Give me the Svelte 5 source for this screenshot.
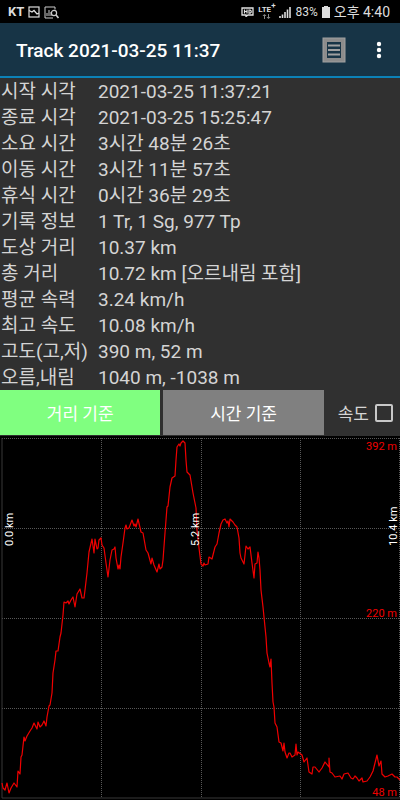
<script lang="ts">
  let mode = $state('distance');
  let showSpeed = $state(false);

  const rows = [
    ['시작 시각', '2021-03-25 11:37:21'],
    ['종료 시각', '2021-03-25 15:25:47'],
    ['소요 시간', '3시간 48분 26초'],
    ['이동 시간', '3시간 11분 57초'],
    ['휴식 시간', '0시간 36분 29초'],
    ['기록 정보', '1 Tr, 1 Sg, 977 Tp'],
    ['도상 거리', '10.37 km'],
    ['총 거리', '10.72 km [오르내림 포함]'],
    ['평균 속력', '3.24 km/h'],
    ['최고 속도', '10.08 km/h'],
    ['고도(고,저)', '390 m, 52 m'],
    ['오름,내림', '1040 m, -1038 m']
  ];

  // 고도 그래프 좌표 (400 x 364)
  const profile = `
    2,347 3,352 5,354 7,347 9,357 11,352 14,347 17,351 18,335 20,338 21,321 22,319 24,301 25,305
    27,300 30,295 32,292 34,287 37,293 38,286 40,291 42,289 44,285 46,290 47,281 49,270 50,269
    52,257 53,237 55,224 56,215 58,215 60,201 61,197 63,179 64,166 66,167 68,165 69,168 71,164
    73,161 75,171 77,158 80,153 82,162 84,162 85,154 87,137 89,116 92,103 94,117 95,103 97,113
    98,112 99,104 101,102 102,109 104,112 106,127 108,141 110,124 112,114 114,113 115,111
    116,122 118,133 119,129 120,133 121,121 123,107 125,92 126,89 127,93 129,92 132,84 134,90
    135,88 136,91 138,83 141,96 143,97 146,114 148,117 151,128 152,122 154,129 157,136 159,128
    160,133 162,131 163,124 165,97 167,71 168,70 170,51 172,42 175,40 176,24 177,11 179,8 180,10
    181,7 183,5 185,7 186,24 187,36 190,39 193,57 196,72 197,94 199,112 201,128 203,130 204,127
    205,129 208,128 209,121 212,123 215,111 217,108 219,97 221,88 223,84 225,83 227,87 228,85
    229,91 230,83 233,86 235,89 237,91 239,102 240,117 241,122 244,128 246,110 248,113 250,111
    252,127 254,142 255,128 257,127 258,116 259,122 260,134 261,154 263,171 264,181 266,201
    267,217 269,227 270,231 271,223 272,247 273,266 274,271 275,287 277,291 279,306 281,307
    283,315 284,307 285,316 287,322 289,317 290,317 292,321 295,319 296,308 297,319 298,316
    302,319 304,326 307,322 309,336 312,338 313,331 315,331 319,336 322,332 325,326 329,331
    329,322 330,336 332,337 335,341 340,340 342,343 344,338 348,337 351,342 353,343 355,340
    357,342 359,345 362,342 363,346 367,345 370,341 373,335 375,327 377,319 379,330 381,325
    382,338 385,341 388,340 392,338 395,341 397,341 400,344`;

  const gridX = [101, 201, 300, 399];
  const gridY = [2, 92, 182, 272];

  const distances = [
    { x: 13, text: '0.0 km' },
    { x: 199, text: '5.2 km' },
    { x: 397, text: '10.4 km' }
  ];

  const heights = [
    { y: 14, text: '392 m' },
    { y: 181, text: '220 m' },
    { y: 360, text: '48 m' }
  ];
</script>

<div class="screen">
  <div class="status-bar">
    <span class="carrier">KT</span>
    <svg width="12" height="12" viewBox="0 0 12 12" fill="none" stroke="#ddd">
      <rect x="1" y="1" width="10" height="10" stroke-width="1.2" />
      <path d="M1 4.5l3 1.5 2-1.5 3 3.5 2-1" stroke-width="1.3" />
    </svg>
    <svg width="15" height="13" viewBox="0 0 15 13" fill="none" stroke="#ccc">
      <path d="M11 3.5V1H1v11h8" />
      <path d="M3 10V7M5 10V4M7 10V6" />
      <circle cx="10" cy="7" r="2.6" stroke-width="1.2" />
      <path d="M12 9l2.5 3" stroke-width="1.6" />
    </svg>
    <span class="spacer"></span>
    <svg width="13" height="10" viewBox="0 0 13 10" fill="none" stroke="#e4e4e4">
      <path d="M3 8H1V1h11v7H7L5 9.5V8H3" stroke-width="1.3" />
      <path d="M3.5 2.5v4M6 2.5v4M3.5 4.5H6M8 3v3.2h1.2l1-1V4l-1-1z" stroke-width="1.2" />
    </svg>
    <span class="lte">
      <span>LTE<sup>+</sup></span>
      <svg width="9" height="5" viewBox="0 0 9 5" fill="#888">
        <path d="M2 5V2H.5l2-2 2 2H3v3zM6 0v3H4.5l2 2 2-2H7V0z" />
      </svg>
    </span>
    <svg width="12" height="12" viewBox="0 0 12 12" stroke="#ddd" stroke-width="1.6">
      <path d="M1 12v-2M3.5 12V8.5M6 12V6M8.5 12V3.5M11 12V1" />
    </svg>
    <span>83%</span>
    <svg width="8" height="12" viewBox="0 0 8 12" fill="#ddd">
      <path d="M2 0h4v1h2v11H0V1h2z" />
    </svg>
    <span class="clock">오후 4:40</span>
  </div>

  <header>
    <h1>Track 2021-03-25 11:37</h1>
    <button class="icon-button list" aria-label="목록">
      <svg width="24" height="26" viewBox="0 0 24 26">
        <rect x="1" y="1" width="22" height="24" fill="#8c8c8c" stroke="#a0a0a0" />
        <rect x="5" y="5" width="14" height="16" fill="#173446" />
        <path d="M6 8.5h12M6 13h12M6 17.5h12" stroke="#a0a0a0" stroke-width="2" />
      </svg>
    </button>
    <button class="icon-button" aria-label="더보기">
      <svg width="6" height="18" viewBox="0 0 6 18" fill="#fff">
        <circle cx="3" cy="3" r="2.2" />
        <circle cx="3" cy="9" r="2.2" />
        <circle cx="3" cy="15" r="2.2" />
      </svg>
    </button>
  </header>

  <table>
    <tbody>
      {#each rows as [label, value]}
        <tr>
          <th scope="row">{label}</th>
          <td>{value}</td>
        </tr>
      {/each}
    </tbody>
  </table>

  <div class="controls">
    <button class="tab" class:active={mode === 'distance'} onclick={() => (mode = 'distance')}>
      거리 기준
    </button>
    <button class="tab" class:active={mode === 'time'} onclick={() => (mode = 'time')}>
      시간 기준
    </button>
    <label>
      속도
      <input type="checkbox" bind:checked={showSpeed} />
    </label>
  </div>

  <svg class="chart" viewBox="0 0 400 364" role="img" aria-label="고도 그래프">
    <g class="grid">
      {#each gridX as x}
        <line x1={x} y1="2" x2={x} y2="362" />
      {/each}
      {#each gridY as y}
        <line x1="2" y1={y} x2="400" y2={y} />
      {/each}
    </g>
    <path class="axis" d="M2 2V362H400" />
    <polyline points={profile} />
    {#each distances as d}
      <text class="distance" transform="translate({d.x} 110) rotate(-90)">{d.text}</text>
    {/each}
    {#each heights as h}
      <text class="height" x="397" y={h.y}>{h.text}</text>
    {/each}
  </svg>
</div>

<style>
  :global(body) {
    margin: 0;
    background: #000;
  }

  .screen {
    background: #303030;
    color: #d4d4d4;
    font-family: Roboto, 'Noto Sans CJK KR', sans-serif;
  }

  button {
    margin: 0;
    padding: 0;
    border: none;
    font-family: inherit;
    cursor: pointer;
  }

  .status-bar {
    display: flex;
    align-items: center;
    gap: 4px;
    height: 22px;
    padding: 1px 10px 0 8px;
    background: #000;
    color: #ddd;
    font-size: 12px;
    line-height: 22px;
    white-space: nowrap;
  }

  .carrier {
    font-size: 13px;
    font-weight: 700;
  }

  .spacer {
    flex: 1;
  }

  .lte {
    display: flex;
    flex-direction: column;
    align-items: center;
    font-size: 8px;
    font-weight: 700;
    line-height: 8px;
  }

  .lte sup {
    font-size: 8px;
    line-height: 1px;
  }

  .clock {
    font-size: 14px;
  }

  header {
    display: flex;
    align-items: center;
    height: 53px;
    padding: 0 4px 0 16px;
    background: #173446;
    border-bottom: 2px solid #0c82b8;
  }

  h1 {
    flex: 1;
    margin: 0;
    padding-top: 2px;
    color: #fff;
    font-size: 19px;
    font-weight: 500;
  }

  .icon-button {
    display: flex;
    align-items: center;
    justify-content: center;
    width: 34px;
    height: 48px;
    background: none;
  }

  .list {
    width: 56px;
  }

  table {
    width: 100%;
    border-collapse: collapse;
    font-size: 19px;
    line-height: 24px;
  }

  th,
  td {
    padding: 2px 0 0;
    font-weight: 400;
    text-align: left;
    white-space: nowrap;
  }

  th {
    width: 97px;
    padding-left: 1px;
  }

  .controls {
    display: flex;
    gap: 3px;
    height: 45px;
    padding-bottom: 1px;
    font-size: 17px;
  }

  .tab {
    flex: 1;
    background: #808080;
    color: #fff;
    font-size: 17px;
  }

  .tab.active {
    background: #80ff80;
  }

  label {
    display: flex;
    align-items: center;
    gap: 6px;
    padding: 0 7px 0 11px;
  }

  input {
    appearance: none;
    width: 18px;
    height: 18px;
    margin: 0;
    border: 2px solid #c8c8c8;
    border-radius: 2px;
  }

  input:checked {
    background: #80ff80;
  }

  .chart {
    display: block;
    width: 100%;
    background: #000;
    font-size: 11px;
  }

  .grid line {
    stroke: #585858;
    stroke-dasharray: 1 1;
    shape-rendering: crispEdges;
  }

  .axis {
    fill: none;
    stroke: #383838;
  }

  polyline {
    fill: none;
    stroke: #f00000;
    stroke-width: 1.2;
    stroke-linejoin: round;
  }

  .distance {
    fill: #fff;
  }

  .height {
    fill: #f00000;
    text-anchor: end;
  }
</style>
